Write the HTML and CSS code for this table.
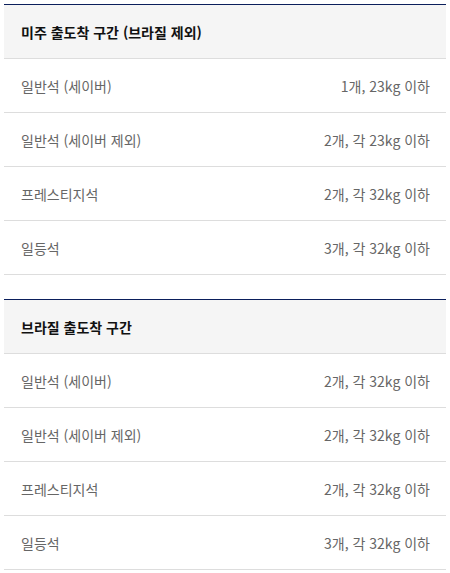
FILE: index.html
```html
<!DOCTYPE html>
<html lang="ko">
<head>
<meta charset="utf-8">
<link rel="stylesheet" href="styles.css">
</head>
<body>
<div class="page">
  <section class="table">
    <div class="head">미주 출도착 구간 (브라질 제외)</div>
    <div class="row"><span class="label">일반석 (세이버)</span><span class="value">1개, 23kg 이하</span></div>
    <div class="row"><span class="label">일반석 (세이버 제외)</span><span class="value">2개, 각 23kg 이하</span></div>
    <div class="row"><span class="label">프레스티지석</span><span class="value">2개, 각 32kg 이하</span></div>
    <div class="row"><span class="label">일등석</span><span class="value">3개, 각 32kg 이하</span></div>
  </section>
  <section class="table">
    <div class="head">브라질 출도착 구간</div>
    <div class="row"><span class="label">일반석 (세이버)</span><span class="value">2개, 각 32kg 이하</span></div>
    <div class="row"><span class="label">일반석 (세이버 제외)</span><span class="value">2개, 각 32kg 이하</span></div>
    <div class="row"><span class="label">프레스티지석</span><span class="value">2개, 각 32kg 이하</span></div>
    <div class="row"><span class="label">일등석</span><span class="value">3개, 각 32kg 이하</span></div>
  </section>
</div>
</body>
</html>
```
FILE: styles.css
```css
html, body {
  margin: 0;
  padding: 0;
  background: #ffffff;
}
body {
  font-family: "Noto Sans CJK KR", "Noto Sans", sans-serif;
}
.page {
  padding: 4px 4px 0 4px;
  display: flex;
  flex-direction: column;
  gap: 24px;
  width: 442px;
}
.table {
  border-top: 1px solid #0b1f5c;
}
.head {
  height: 53px;
  box-sizing: border-box;
  display: flex;
  align-items: center;
  padding: 0 16px 0 17px;
  background: #f5f5f5;
  border-bottom: 1px solid #dddddd;
  height: 54px;
  font-size: 14px;
  font-weight: 700;
  color: #111111;
}
.row {
  height: 54px;
  box-sizing: border-box;
  display: flex;
  align-items: center;
  justify-content: space-between;
  padding: 0 16px 0 17px;
  border-bottom: 1px solid #dddddd;
  font-size: 14px;
  color: #666666;
}
```
